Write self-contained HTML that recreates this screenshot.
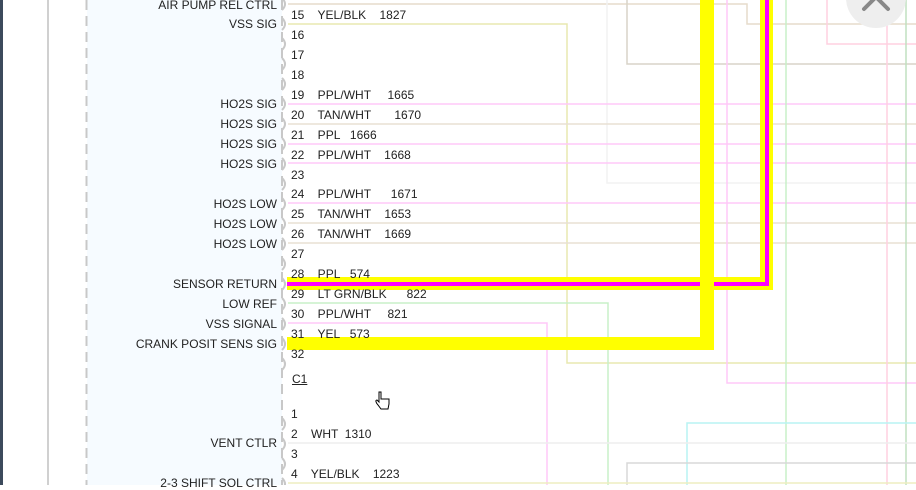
<!DOCTYPE html>
<html><head><meta charset="utf-8"><style>
html,body{margin:0;padding:0;width:916px;height:485px;overflow:hidden;background:#fff;font-family:"Liberation Sans",Arial,sans-serif;font-size:12px;color:#222}
.t{position:absolute;white-space:pre;line-height:14px}
.l{position:absolute;right:639px;text-align:right;white-space:pre;line-height:14px}
</style></head><body>
<svg width="916" height="485" style="position:absolute;left:0;top:0">
<rect x="0" y="0" width="3" height="485" fill="#3c4a5c"/>
<rect x="47" y="0" width="2" height="485" fill="#d0d0d0"/>
<rect x="87" y="0" width="195" height="485" fill="#f6fbff"/>
<line x1="86.5" y1="0" x2="86.5" y2="485" stroke="#c8c8c8" stroke-width="2" stroke-dasharray="10,6"/>
<line x1="282" y1="0" x2="282" y2="485" stroke="#c8c8c8" stroke-width="2" stroke-dasharray="10,6"/>
<g fill="none" stroke="#c8c8c8" stroke-width="2">
<path d="M282 -2 q6 6 0 12"/><path d="M282 18 q6 6 0 12"/><path d="M282 38 q6 6 0 12"/><path d="M282 58 q6 6 0 12"/><path d="M282 78 q6 6 0 12"/><path d="M282 98 q6 6 0 12"/><path d="M282 118 q6 6 0 12"/><path d="M282 138 q6 6 0 12"/><path d="M282 158 q6 6 0 12"/><path d="M282 178 q6 6 0 12"/><path d="M282 198 q6 6 0 12"/><path d="M282 218 q6 6 0 12"/><path d="M282 238 q6 6 0 12"/><path d="M282 258 q6 6 0 12"/><path d="M282 278 q6 6 0 12"/><path d="M282 298 q6 6 0 12"/><path d="M282 318 q6 6 0 12"/><path d="M282 338 q6 6 0 12"/><path d="M282 358 q6 6 0 12"/><path d="M282 418 q6 6 0 12"/><path d="M282 438 q6 6 0 12"/><path d="M282 458 q6 6 0 12"/><path d="M282 478 q6 6 0 12"/>
</g>
<g fill="none" stroke-width="1.5">
<path d="M288 4 H747 V24 H916" stroke="#e6dccb"/>
<path d="M288 24 H567 V363 H916" stroke="#e8e8b0"/>
<path d="M627 0 V64 H916" stroke="#d8d4c8"/>
<path d="M607 0 V183 H916" stroke="#f2f2f2"/>
<path d="M827 0 V44 H916" stroke="#ffd0e0"/>
<line x1="288" y1="104" x2="916" y2="104" stroke="#ffc8f8"/>
<line x1="288" y1="124" x2="916" y2="124" stroke="#e8e0d4"/>
<line x1="288" y1="144" x2="916" y2="144" stroke="#ffc8f8"/>
<line x1="288" y1="163" x2="916" y2="163" stroke="#ffc8f8"/>
<line x1="288" y1="203" x2="916" y2="203" stroke="#ffc8f8"/>
<line x1="288" y1="223" x2="916" y2="223" stroke="#e8e0d4"/>
<line x1="288" y1="243" x2="916" y2="243" stroke="#e8e0d4"/>
<path d="M288 303 H608 V485" stroke="#c8f0c8"/>
<path d="M288 323 H547 V485" stroke="#ffc8f8"/>
<path d="M727 0 V383 H916" stroke="#ffc8f8"/>
<line x1="786" y1="0" x2="786" y2="485" stroke="#c8f0c8"/>
<line x1="887" y1="0" x2="887" y2="485" stroke="#ffd0e0"/>
<line x1="906" y1="0" x2="906" y2="485" stroke="#c0e0c0"/>
<path d="M687 485 V423 H916" stroke="#b8f4f4"/>
<path d="M627 485 V463 H916" stroke="#d8d8d8"/>
<line x1="288" y1="443" x2="916" y2="443" stroke="#eeeeee"/>
<line x1="288" y1="483" x2="916" y2="483" stroke="#eeeec0"/>
</g>
<rect x="287" y="277" width="486" height="13" fill="#ffff00"/>
<rect x="760" y="0" width="13" height="290" fill="#ffff00"/>
<path d="M287 284 H767 V0" fill="none" stroke="#ff00ff" stroke-width="4"/>
<rect x="287" y="337" width="427" height="13" fill="#ffff00"/>
<rect x="700" y="0" width="14" height="350" fill="#ffff00"/>
<circle cx="876" cy="-2" r="30" fill="#eeeeee"/>
<path d="M864 9 L876 -3 L888 9" fill="none" stroke="#888" stroke-width="4" stroke-linecap="round"/>
<path d="M379 392 v10 l-2 -2 c-2 0 -1 3 1 5 l3 4 h7 l1 -5 v-5 h-8 v-7 z" fill="#fff" stroke="#000" stroke-width="1"/>
</svg>
<div class="l" style="top:-2px">AIR PUMP REL CTRL</div>
<div class="l" style="top:17px">VSS SIG</div>
<div class="l" style="top:97px">HO2S SIG</div>
<div class="l" style="top:117px">HO2S SIG</div>
<div class="l" style="top:137px">HO2S SIG</div>
<div class="l" style="top:157px">HO2S SIG</div>
<div class="l" style="top:197px">HO2S LOW</div>
<div class="l" style="top:217px">HO2S LOW</div>
<div class="l" style="top:237px">HO2S LOW</div>
<div class="l" style="top:277px">SENSOR RETURN</div>
<div class="l" style="top:297px">LOW REF</div>
<div class="l" style="top:317px">VSS SIGNAL</div>
<div class="l" style="top:337px">CRANK POSIT SENS SIG</div>
<div class="l" style="top:436px">VENT CTLR</div>
<div class="l" style="top:476px">2-3 SHIFT SOL CTRL</div>
<div class="t" style="left:291px;top:8px">15    YEL/BLK    1827</div>
<div class="t" style="left:291px;top:28px">16</div>
<div class="t" style="left:291px;top:48px">17</div>
<div class="t" style="left:291px;top:68px">18</div>
<div class="t" style="left:291px;top:88px">19    PPL/WHT     1665</div>
<div class="t" style="left:291px;top:108px">20    TAN/WHT       1670</div>
<div class="t" style="left:291px;top:128px">21    PPL   1666</div>
<div class="t" style="left:291px;top:148px">22    PPL/WHT    1668</div>
<div class="t" style="left:291px;top:168px">23</div>
<div class="t" style="left:291px;top:187px">24    PPL/WHT      1671</div>
<div class="t" style="left:291px;top:207px">25    TAN/WHT    1653</div>
<div class="t" style="left:291px;top:227px">26    TAN/WHT    1669</div>
<div class="t" style="left:291px;top:247px">27</div>
<div class="t" style="left:291px;top:267px">28    PPL   574</div>
<div class="t" style="left:291px;top:287px">29    LT GRN/BLK      822</div>
<div class="t" style="left:291px;top:307px">30    PPL/WHT     821</div>
<div class="t" style="left:291px;top:327px">31    YEL   573</div>
<div class="t" style="left:291px;top:347px">32</div>
<div class="t" style="left:292px;top:372px;text-decoration:underline">C1</div>
<div class="t" style="left:291px;top:407px">1</div>
<div class="t" style="left:291px;top:427px">2    WHT  1310</div>
<div class="t" style="left:291px;top:447px">3</div>
<div class="t" style="left:291px;top:467px">4    YEL/BLK    1223</div>
</body></html>
